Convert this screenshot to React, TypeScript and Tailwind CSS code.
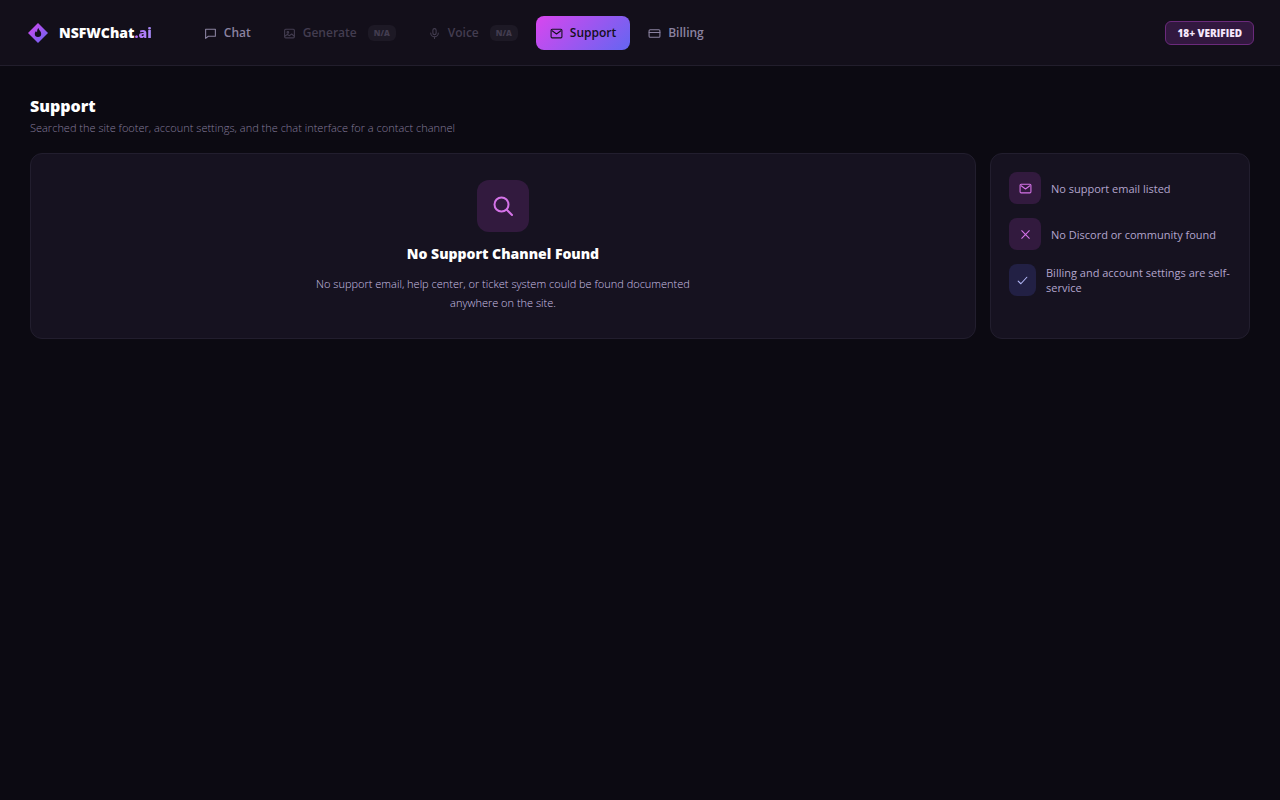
import type { ReactNode } from "react";
import clsx from "clsx";

function Icon({ size = 13, width = 2, children }: { size?: number; width?: number; children: ReactNode }) {
  return (
    <svg
      width={size}
      height={size}
      viewBox="0 0 24 24"
      fill="none"
      stroke="currentColor"
      strokeWidth={width}
      strokeLinecap="round"
      strokeLinejoin="round"
      className="shrink-0"
      aria-hidden="true"
    >
      {children}
    </svg>
  );
}

const chatIcon = <path d="M3 4h18v13H8l-5 4z" />;

const imageIcon = (
  <>
    <rect x="3" y="4" width="18" height="16" rx="2" />
    <circle cx="9" cy="10" r="1.5" />
    <path d="M21 17l-5-4-4 3-4-2-5 3" />
  </>
);

const micIcon = (
  <>
    <rect x="9" y="3" width="6" height="11" rx="3" />
    <path d="M5 11a7 7 0 0 0 14 0M12 18v3" />
  </>
);

const mailIcon = (
  <>
    <rect x="2" y="4" width="20" height="16" rx="2" />
    <path d="M4 7l8 6 8-6" />
  </>
);

const cardIcon = (
  <>
    <rect x="2" y="5" width="20" height="14" rx="2" />
    <path d="M2 10h20" />
  </>
);

const navItems = [
  { label: "Chat", icon: chatIcon },
  { label: "Generate", icon: imageIcon, disabled: true },
  { label: "Voice", icon: micIcon, disabled: true },
  { label: "Support", icon: mailIcon, active: true },
  { label: "Billing", icon: cardIcon },
];

const findings = [
  { text: "No support email listed", icon: mailIcon },
  { text: "No Discord or community found", icon: <path d="M5 5l14 14M19 5L5 19" /> },
  { text: "Billing and account settings are self-service", icon: <path d="M4 13l5 5L20 6" />, ok: true },
];

function Logo() {
  return (
    <a href="#" className="flex items-center gap-2.5 text-sm font-extrabold text-white">
      <svg width="22" height="22" viewBox="0 0 22 22" aria-hidden="true">
        <defs>
          <linearGradient id="logo" x1="0" y1="0" x2="1" y2="1">
            <stop offset="0" stopColor="#d946ef" />
            <stop offset="1" stopColor="#6366f1" />
          </linearGradient>
        </defs>
        <path d="M11 1L21 11 11 21 1 11z" fill="url(#logo)" />
        <path
          d="M11.500 6c.2 2 2.700 3.200 2.700 5.800a3.200 3.200 0 0 1-6.400 0c0-1.400.7-2.200 1.300-2.900.1.800.5 1.200 1 1.300C10 8.500 10.500 7 11.500 6z"
          fill="#14101c"
        />
      </svg>
      <span>
        NSFWChat
        <span className="bg-linear-to-r from-[#b56cf5] to-[#a78bfa] bg-clip-text text-transparent">.ai</span>
      </span>
    </a>
  );
}

export default function App() {
  return (
    <div className="min-h-screen bg-[#0c0a12] font-['Open_Sans','Noto_Sans',sans-serif] text-white">
      <header className="flex items-center border-b border-[#221e2c] bg-[#130f1a] pt-4 pr-[26px] pb-[15px] pl-[27px]">
        <Logo />

        <nav className="ml-[38px] flex items-center gap-1">
          {navItems.map((item) => (
            <button
              key={item.label}
              type="button"
              disabled={item.disabled}
              aria-current={item.active ? "page" : undefined}
              className={clsx(
                "flex h-[34px] items-center gap-[7px] rounded-lg px-3.5 text-xs font-semibold",
                item.active && "bg-linear-[135deg] from-[#d946ef] to-[#6366f1] text-[#14101c]",
                item.disabled && "text-[#433d50]",
                !item.active && !item.disabled && "text-[#8a82a0]"
              )}
            >
              <Icon>{item.icon}</Icon>
              {item.label}
              {item.disabled && (
                <span className="ml-1 rounded-md bg-[#1d1925] px-1.5 py-0.5 text-[8px] leading-3 font-extrabold">
                  N/A
                </span>
              )}
            </button>
          ))}
        </nav>

        <span className="ml-auto rounded-md border border-[#6b2a7c] bg-[#32183f] px-[11px] py-1 text-[10px] leading-[14px] font-extrabold text-[#f5e6fb]">
          18+ VERIFIED
        </span>
      </header>

      <main className="px-[30px] py-7">
        <h1 className="text-base leading-6 font-extrabold">Support</h1>
        <p className="text-[11px] leading-5 font-light text-[#857c9c]">
          Searched the site footer, account settings, and the chat interface for a contact channel
        </p>

        <div className="mt-[15px] grid grid-cols-[1fr_260px] gap-3.5">
          <section className="flex flex-col items-center rounded-xl border border-[#221e2e] bg-[#161220] px-6 py-[26px] text-center">
            <div className="flex size-[52px] items-center justify-center rounded-xl bg-[#321a3e] text-[#d573e8]">
              <Icon size={24}>
                <circle cx="10.500" cy="10.500" r="7" />
                <path d="M16 16l5 5" />
              </Icon>
            </div>
            <h2 className="mt-3 text-sm leading-5 font-extrabold">No Support Channel Found</h2>
            <p className="mt-[10px] max-w-[380px] text-[11px] leading-[19px] font-light text-[#cdc0e6]">
              No support email, help center, or ticket system could be found documented anywhere on the site.
            </p>
          </section>

          <aside className="rounded-xl border border-[#221e2e] bg-[#161220] p-[18px]">
            <ul className="flex flex-col gap-3.5">
              {findings.map((item) => (
                <li key={item.text} className="flex items-center gap-2.5 text-[11px] leading-[15px] text-[#b3a5cd]">
                  <span
                    className={clsx(
                      "flex h-8 shrink-0 items-center justify-center rounded-lg",
                      item.ok ? "w-[27px] bg-[#222044] text-[#b4b8f8]" : "w-8 bg-[#321a3e] text-[#d573e8]"
                    )}
                  >
                    <Icon>{item.icon}</Icon>
                  </span>
                  {item.text}
                </li>
              ))}
            </ul>
          </aside>
        </div>
      </main>
    </div>
  );
}
